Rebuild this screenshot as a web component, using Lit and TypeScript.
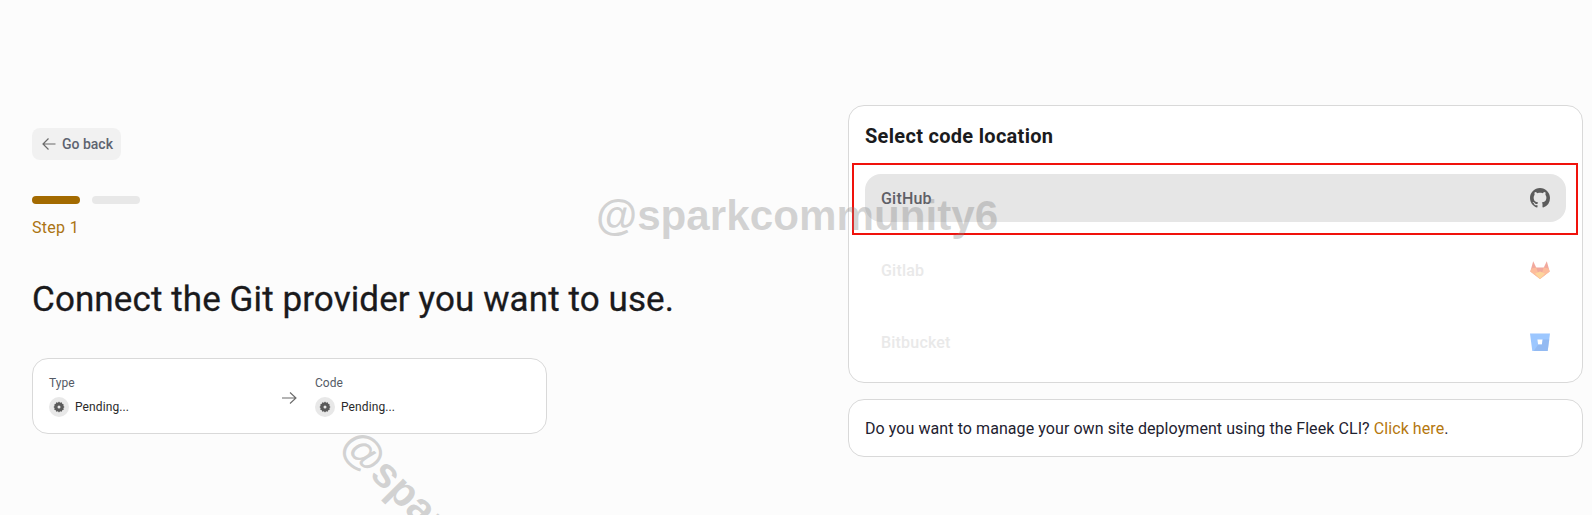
import { LitElement, html, css, svg } from "lit";
import { customElement } from "lit/decorators.js";

const gear = svg`<svg class="gear" viewBox="0 0 16 16" width="12" height="12"><path fill="#5a5a5a" fill-rule="evenodd" d="M8 .6l1.5 1.6 2.1-.4.7 2 2 .7-.4 2.1L15.4 8l-1.5 1.4.4 2.1-2 .7-.7 2-2.1-.4L8 15.4l-1.5-1.6-2.1.4-.7-2-2-.7.4-2.1L.6 8l1.5-1.4-.4-2.1 2-.7.7-2 2.1.4L8 .6zM8 6a2 2 0 100 4 2 2 0 000-4z"/></svg>`;

@customElement("app-root")
export class AppRoot extends LitElement {
  static styles = css`
    :host { display: block; position: relative; width: 1592px; height: 515px; overflow: hidden; background: #fcfcfc; font-family: Roboto, sans-serif; color: #1c1c1c; }
    .page { display: grid; grid-template-columns: 816px 735px; padding: 105px 0 0 32px; align-items: start; }
    .left { padding-top: 23px; display: flex; flex-direction: column; align-items: flex-start; }
    .back { display: flex; align-items: center; gap: 6px; width: 89px; height: 32px; box-sizing: border-box; padding-left: 10px; background: #f1f1f1; border-radius: 8px; font-size: 14px; font-weight: 500; color: #5e6470; }
    .bars { display: flex; gap: 12px; margin-top: 36px; }
    .bar { width: 48px; height: 8px; border-radius: 4px; background: #e8e8e8; }
    .bar.on { background: #a36a00; }
    .step { margin-top: 14px; font-size: 16px; line-height: 20px; letter-spacing: .3px; color: #ab7413; }
    h1 { margin: 40px 0 0; font-size: 35px; line-height: 44px; font-weight: 400; letter-spacing: .1px; white-space: nowrap; color: #1a1a1c; -webkit-text-stroke: .3px #1a1a1c; }
    .summary { margin-top: 36px; width: 515px; height: 76px; box-sizing: border-box; border: 1px solid #d9d9d9; border-radius: 16px; background: #fff; display: grid; grid-template-columns: 200px 66px 1fr; padding: 16px 16px 0; }
    .lbl { font-size: 12px; line-height: 16px; color: #555b66; }
    .val { margin-top: 6px; display: flex; align-items: center; gap: 6px; font-size: 12px; line-height: 20px; letter-spacing: .1px; color: #2a2a2a; }
    .dot { width: 20px; height: 20px; border-radius: 50%; background: #e8e8e8; display: flex; align-items: center; justify-content: center; }
    .gear { display: block; }
    .arrow { padding-top: 15px; }
    .arrow svg, .back svg { display: block; }
    .arrow svg { margin-left: 32px; }
    .right { display: flex; flex-direction: column; gap: 16px; }
    .card { border: 1px solid #d9d9d9; border-radius: 16px; background: #fff; box-sizing: border-box; padding: 16px; }
    h2 { margin: 0 0 24px; font-size: 20px; line-height: 28px; font-weight: 700; letter-spacing: .3px; color: #1b1b1d; }
    .rows { display: flex; flex-direction: column; gap: 24px; }
    .row { height: 48px; border-radius: 16px; display: flex; align-items: center; justify-content: space-between; padding: 0 16px; font-size: 16px; font-weight: 500; letter-spacing: .2px; color: #5f6066; }
    .row.active { background: #e6e6e6; }
    .row.off { color: #e9e9e9; }
    .row svg { display: block; }
    .row.off svg { opacity: .45; }
    .note { height: 58px; padding: 0 16px; display: flex; align-items: center; font-size: 16px; letter-spacing: .075px; color: #1e2230; white-space: pre; }
    .note a { color: #b5780f; }
    .red { position: absolute; left: 852px; top: 163px; width: 726px; height: 72px; box-sizing: border-box; border: 2px solid #f0120c; pointer-events: none; }
    .wm { position: absolute; font-family: "Liberation Sans", sans-serif; font-weight: 700; color: rgba(130,130,130,.34); white-space: nowrap; pointer-events: none; font-size: 42.2px; line-height: 44px; }
    .wm.a { left: 596px; top: 194px; }
    .wm.b { transform: rotate(45deg); transform-origin: 0 0; left: 365px; top: 421px; }
  `;

  render() {
    return html`
      <div class="page">
        <div class="left">
          <div class="back">
            <svg width="14" height="14" viewBox="0 0 14 14" fill="none" stroke="#6b6b6b" stroke-width="1.2"><path d="M13.5 7H1M6.5 1.5L1 7l5.5 5.5"/></svg>
            Go back
          </div>
          <div class="bars"><div class="bar on"></div><div class="bar"></div></div>
          <div class="step">Step 1</div>
          <h1>Connect the Git provider you want to use.</h1>
          <div class="summary">
            <div>
              <div class="lbl">Type</div>
              <div class="val"><span class="dot">${gear}</span>Pending...</div>
            </div>
            <div class="arrow">
              <svg width="16" height="16" viewBox="0 0 16 16" fill="none" stroke="#6b6b6b" stroke-width="1.1"><path d="M1 8h14M9 2.5L15 8l-6 5.5"/></svg>
            </div>
            <div>
              <div class="lbl">Code</div>
              <div class="val"><span class="dot">${gear}</span>Pending...</div>
            </div>
          </div>
        </div>
        <div class="right">
          <div class="card">
            <h2>Select code location</h2>
            <div class="rows">
              <div class="row active">GitHub
                <svg width="20" height="20" viewBox="0 0 16 16"><path fill="#5c5c5c" d="M8 0C3.58 0 0 3.58 0 8c0 3.54 2.29 6.53 5.47 7.59.4.07.55-.17.55-.38 0-.19-.01-.82-.01-1.49-2.01.37-2.53-.49-2.69-.94-.09-.23-.48-.94-.82-1.13-.28-.15-.68-.52-.01-.53.63-.01 1.08.58 1.23.82.72 1.21 1.87.87 2.33.66.07-.52.28-.87.51-1.07-1.78-.2-3.64-.89-3.64-3.95 0-.87.31-1.59.82-2.15-.08-.2-.36-1.02.08-2.12 0 0 .67-.21 2.2.82.64-.18 1.32-.27 2-.27s1.36.09 2 .27c1.53-1.04 2.2-.82 2.2-.82.44 1.1.16 1.92.08 2.12.51.56.82 1.27.82 2.15 0 3.07-1.87 3.75-3.65 3.95.29.25.54.73.54 1.48 0 1.07-.01 1.93-.01 2.2 0 .21.15.46.55.38A8.01 8.01 0 0016 8c0-4.42-3.58-8-8-8z"/></svg>
              </div>
              <div class="row off">Gitlab
                <svg width="20" height="20" viewBox="0 0 20 20"><path fill="#e24329" d="M10 19L0.3 11.6 3.2 1.2 6.2 7.5H13.8L16.8 1.2 19.7 11.6z"/><path fill="#fc6d26" d="M10 19L.3 11.6 1.5 8.6 6.2 7.5z"/><path fill="#fc6d26" d="M10 19l9.7-7.4-1.2-3L13.8 7.5z"/><path fill="#fca326" d="M10 19l-5-5.6 5-1.8 5 1.8z"/></svg>
              </div>
              <div class="row off">Bitbucket
                <svg width="20" height="20" viewBox="0 0 20 20"><path fill="#2684ff" fill-rule="evenodd" d="M0 1.5h20l-2.3 17.5H2.3zM7.4 7.5l.7 5h3.8l.7-5z"/><path fill="#0052cc" d="M19.3 7.5h-6.6l-.8 5H8.2L4 18.6l.4.4h13.3z" opacity=".55"/></svg>
              </div>
            </div>
          </div>
          <div class="card note"><span>Do you want to manage your own site deployment using the Fleek CLI? <a>Click here</a>.</span></div>
        </div>
      </div>
      <div class="red"></div>
      <div class="wm a">@sparkcommunity6</div>
      <div class="wm b">@sparkcommunity6</div>
    `;
  }
}
